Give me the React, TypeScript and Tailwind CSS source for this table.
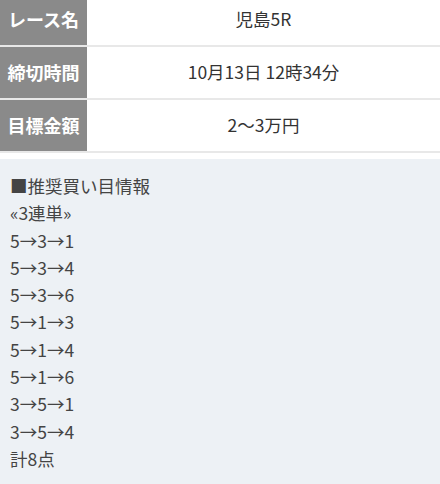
import React from "react";

const rows = [
  { label: "レース名", value: "児島5R" },
  { label: "締切時間", value: "10月13日 12時34分" },
  { label: "目標金額", value: "2〜3万円" },
];

const lines = [
  "«3連単»",
  "5→3→1",
  "5→3→4",
  "5→3→6",
  "5→1→3",
  "5→1→4",
  "5→1→6",
  "3→5→1",
  "3→5→4",
  "計8点",
];

export default function App() {
  return (
    <div
      className="w-[440px] h-[484px] overflow-hidden bg-white"
      style={{ fontFamily: '"Noto Sans CJK JP", "Noto Sans", sans-serif' }}
    >
      <div className="-mt-[6px]">
        {rows.map((r) => (
          <div key={r.label} className="flex h-[53px] border-b-2 border-[#e8e8e8]">
            <div className="w-[87px] bg-[#8a8a8a] text-white font-bold text-[18px] flex items-center justify-center">
              {r.label}
            </div>
            <div className="flex-1 flex items-center justify-center text-[17.5px] text-[#333]">
              {r.value}
            </div>
          </div>
        ))}
      </div>
      <div className="mt-[6px] bg-[#edf1f5] h-[330px] pt-[13px] px-[10px] text-[17.5px] leading-[27.3px] text-[#444]">
        <div>■推奨買い目情報</div>
        {lines.map((l, i) => (
          <div key={i}>{l}</div>
        ))}
      </div>
    </div>
  );
}
